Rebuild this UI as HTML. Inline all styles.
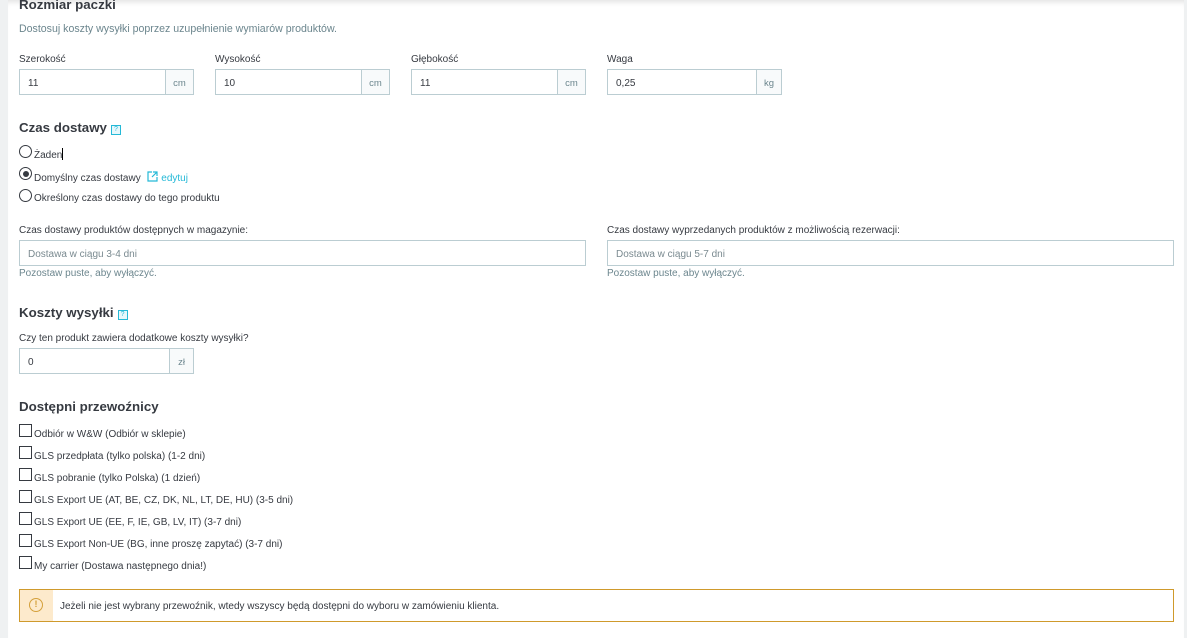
<!DOCTYPE html>
<html><head><meta charset="utf-8"><style>
*{box-sizing:border-box;margin:0;padding:0}
body{width:1187px;height:638px;overflow:hidden;background:#eff1f2;font-family:"Liberation Sans",sans-serif;color:#363a41;position:relative}
.card{position:absolute;left:8px;top:0;width:1176px;height:638px;background:#fff;box-shadow:inset 0 6px 6px -4px rgba(0,0,0,.12)}
.a{position:absolute;white-space:nowrap}
h3{position:absolute;font-size:13.3px;font-weight:bold;color:#363a41;left:19px}
.lbl{font-size:10px;color:#363a41}
.muted{font-size:10.6px;color:#6c868e}
.inp{position:absolute;height:26px;border:1px solid #bbcdd2;background:#fff;font-size:10px;line-height:27px;padding-left:8px;color:#363a41}
.add{position:absolute;right:0;top:0;height:24px;border-left:1px solid #bbcdd2;background:#f8fafb;color:#6c868e;font-size:9.5px;text-align:center}
.q{display:inline-block;width:10px;height:10px;border:1px solid #25b9d7;background:#e6f7fb;color:#25b9d7;font-size:7px;line-height:8px;text-align:center;vertical-align:1px;margin-left:4px;font-weight:normal}
.rad{position:absolute;left:19px;width:13px;height:13px;border:1px solid #363a41;border-radius:50%}
.cb{position:absolute;left:19px;width:13px;height:13px;border:1px solid #363a41}
.ot{position:absolute;left:34px;font-size:10px;white-space:nowrap}
</style></head><body>
<div class="card"></div>
<h3 style="top:-3px">Rozmiar paczki</h3>
<div class="a muted" style="left:19px;top:23px">Dostosuj koszty wysyłki poprzez uzupełnienie wymiarów produktów.</div>
<div class="a lbl" style="left:19px;top:54px">Szerokość</div>
<div class="a lbl" style="left:215px;top:54px">Wysokość</div>
<div class="a lbl" style="left:411px;top:54px">Głębokość</div>
<div class="a lbl" style="left:607px;top:54px">Waga</div>
<div class="inp" style="left:19px;top:69px;width:175px">11<div class="add" style="width:28px">cm</div></div>
<div class="inp" style="left:215px;top:69px;width:175px">10<div class="add" style="width:28px">cm</div></div>
<div class="inp" style="left:411px;top:69px;width:175px">11<div class="add" style="width:28px">cm</div></div>
<div class="inp" style="left:607px;top:69px;width:175px">0,25<div class="add" style="width:25px">kg</div></div>
<h3 style="top:120px">Czas dostawy<span class="q">?</span></h3>
<div class="rad" style="top:145px"></div><div class="ot" style="top:148px">Żaden<span style="display:inline-block;width:1px;height:12px;background:#000;vertical-align:-2px"></span></div>
<div class="rad" style="top:167px"><div style="position:absolute;left:2.5px;top:2.5px;width:6px;height:6px;border-radius:50%;background:#363a41"></div></div>
<div class="ot" style="top:171px">Domyślny czas dostawy <svg width="11" height="11" viewBox="0 0 11 11" style="vertical-align:-1px;margin-left:4px"><path d="M5 1H1v9h9V6M6 1h4v4M10 1L5 6" fill="none" stroke="#25b9d7" stroke-width="1.2"/></svg> <span style="color:#25b9d7">edytuj</span></div>
<div class="rad" style="top:189px"></div><div class="ot" style="top:193px">Określony czas dostawy do tego produktu</div>
<div class="a lbl" style="left:19px;top:225px">Czas dostawy produktów dostępnych w magazynie:</div>
<div class="a lbl" style="left:607px;top:225px">Czas dostawy wyprzedanych produktów z możliwością rezerwacji:</div>
<div class="inp" style="left:19px;top:240px;width:567px;color:#7a8a90">Dostawa w ciągu 3-4 dni</div>
<div class="inp" style="left:607px;top:240px;width:567px;color:#7a8a90">Dostawa w ciągu 5-7 dni</div>
<div class="a muted" style="left:19px;top:268px;font-size:10px">Pozostaw puste, aby wyłączyć.</div>
<div class="a muted" style="left:607px;top:268px;font-size:10px">Pozostaw puste, aby wyłączyć.</div>
<h3 style="top:305px">Koszty wysyłki<span class="q">?</span></h3>
<div class="a lbl" style="left:19px;top:333px">Czy ten produkt zawiera dodatkowe koszty wysyłki?</div>
<div class="inp" style="left:19px;top:348px;width:175px">0<div class="add" style="width:24px">zł</div></div>
<h3 style="top:399px">Dostępni przewoźnicy</h3>
<div class="cb" style="top:424px"></div><div class="ot" style="top:429px">Odbiór w W&amp;W (Odbiór w sklepie)</div>
<div class="cb" style="top:446px"></div><div class="ot" style="top:451px">GLS przedpłata (tylko polska) (1-2 dni)</div>
<div class="cb" style="top:468px"></div><div class="ot" style="top:473px">GLS pobranie (tylko Polska) (1 dzień)</div>
<div class="cb" style="top:490px"></div><div class="ot" style="top:495px">GLS Export UE (AT, BE, CZ, DK, NL, LT, DE, HU) (3-5 dni)</div>
<div class="cb" style="top:512px"></div><div class="ot" style="top:517px">GLS Export UE (EE, F, IE, GB, LV, IT) (3-7 dni)</div>
<div class="cb" style="top:534px"></div><div class="ot" style="top:539px">GLS Export Non-UE (BG, inne proszę zapytać) (3-7 dni)</div>
<div class="cb" style="top:556px"></div><div class="ot" style="top:561px">My carrier (Dostawa następnego dnia!)</div>
<div style="position:absolute;left:19px;top:589px;width:1155px;height:33px;border:1px solid #cf9a2c;background:#fff">
<div style="position:absolute;left:0;top:0;width:33px;height:31px;background:#fdeacc"><div style="position:absolute;left:9px;top:8px;width:14px;height:14px;border:1.5px solid #d4a03b;border-radius:50%;color:#d4a03b;font-size:9px;font-weight:bold;text-align:center;line-height:11px">!</div></div>
<div style="position:absolute;left:40px;top:11px;font-size:10px;white-space:nowrap">Jeżeli nie jest wybrany przewoźnik, wtedy wszyscy będą dostępni do wyboru w zamówieniu klienta.</div>
</div>
</body></html>
